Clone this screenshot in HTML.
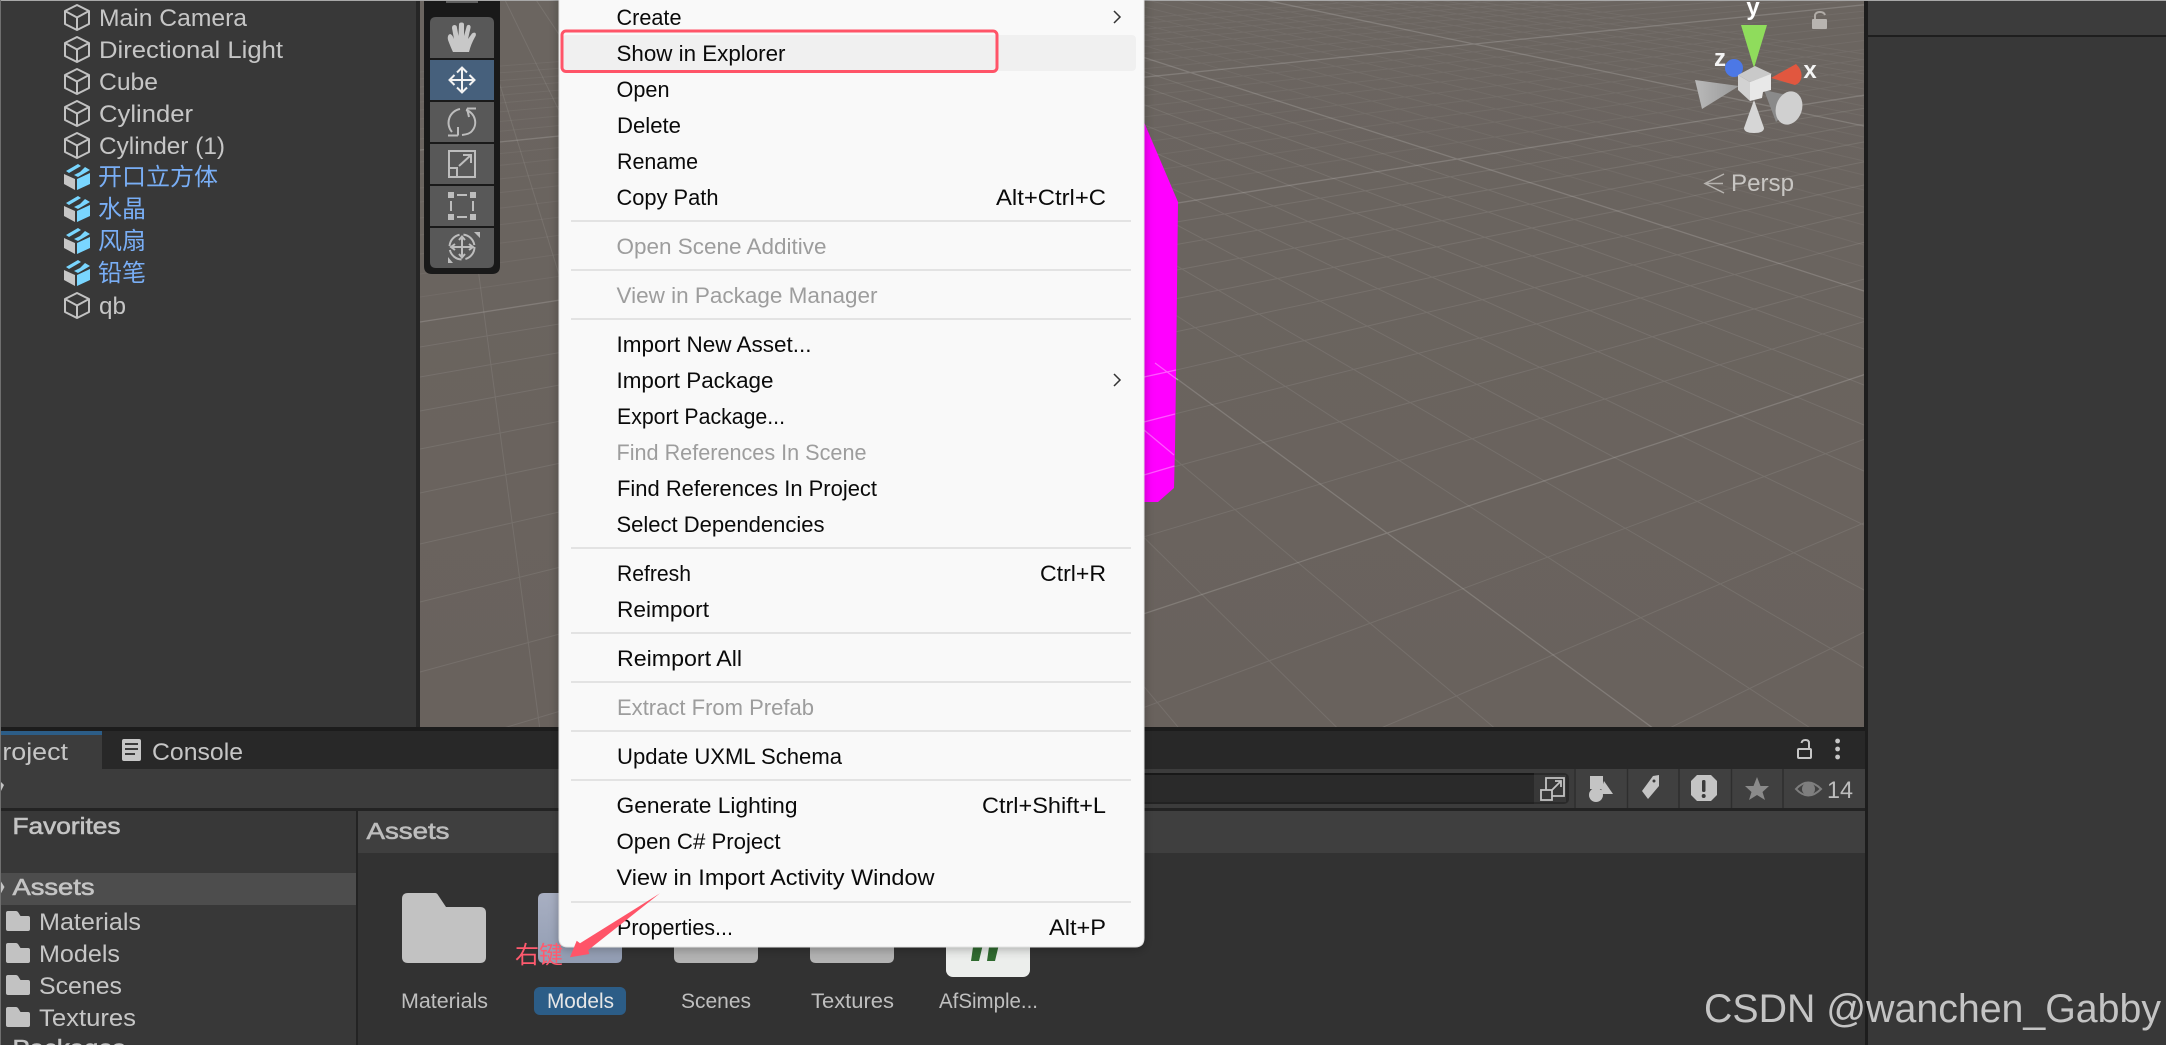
<!DOCTYPE html>
<html><head><meta charset="utf-8"><title>Unity</title>
<style>
html,body{margin:0;padding:0;background:#383838;width:2166px;height:1045px;overflow:hidden}
svg{display:block;position:absolute;left:0;top:0;filter:blur(.35px)}
text{font-family:"Liberation Sans","Noto Sans CJK SC",sans-serif}
.h{font-size:24px;fill:#c6c6c6}
.c{font-size:24px;fill:#79aef5;font-family:"Liberation Sans","Noto Sans CJK SC",sans-serif}
.m{font-size:22px;fill:#0a0a0a}
.d{font-size:22px;fill:#9d9d9d}
.b{font-size:23px;fill:#c4c4c4;stroke:#c4c4c4;stroke-width:.6px}
.l{font-size:21px;fill:#bfbfbf}
</style></head><body>
<svg width="2166" height="1045" viewBox="0 0 2166 1045" xmlns="http://www.w3.org/2000/svg">
<defs>
<clipPath id="sc"><rect x="420" y="0" width="1444" height="727"/></clipPath>
<linearGradient id="bg" x1="0" y1="0" x2="0" y2="1"><stop offset="0" stop-color="#6b6560"/><stop offset="1" stop-color="#69625d"/></linearGradient>
<linearGradient id="mf" x1="0" y1="0" x2="0" y2="1"><stop offset="0" stop-color="#a8afc2"/><stop offset="1" stop-color="#929db3"/></linearGradient>
<linearGradient id="lc" x1="0" y1="0" x2="1" y2="0"><stop offset="0" stop-color="#b9b9b9"/><stop offset="1" stop-color="#999"/></linearGradient>
<filter id="sh" x="-5%" y="-5%" width="110%" height="110%"><feDropShadow dx="0" dy="2" stdDeviation="5" flood-color="#000" flood-opacity=".28"/></filter>
<path id="cube" fill="none" stroke="#c2c2c2" stroke-width="2" stroke-linejoin="round" d="M13 1L25 7V20L13 26L1 20V7ZM1 7L13 13.5L25 7M13 13.5V26"/>
<g id="pf">
<path fill="#c6c6c6" d="M0 11L11 16V27L0 21Z"/>
<path fill="#79d6ff" d="M13 16L26 10V21L13 27Z"/>
<path fill="#79d6ff" d="M2 8L14 1L17 3L5 10ZM16 9L21 4L26 7L14 14L10 12Z"/>
</g>
<path id="fb" d="M6 0H33Q35 0 36 2L44 14H78Q84 14 84 20V64Q84 70 78 70H6Q0 70 0 64V6Q0 0 6 0Z"/>
<path id="fs" fill="#c2c2c2" d="M2 0H10Q11 0 12 1L14.500 5H22Q24 5 24 7V18Q24 20 22 20H2Q0 20 0 18V2Q0 0 2 0Z"/>
</defs>

<!-- base panels -->
<rect width="2166" height="1045" fill="#383838"/>
<rect x="0" y="0" width="416" height="727" fill="#383838"/>
<rect x="416" y="0" width="4" height="735" fill="#262626"/>
<rect x="420" y="0" width="1444" height="727" fill="url(#bg)"/>

<!-- grid -->
<g clip-path="url(#sc)" fill="none">
<path stroke="#fff" stroke-opacity=".085" d="M3463 -156L420 2049M3463 -156L420 1631M3463 -156L420 1344M3463 -156L420 1136M3463 -156L420 977M3463 -156L420 753M3463 -156L420 672M3463 -156L420 602M3463 -156L420 544M3463 -156L420 493M3463 -156L420 449M3463 -156L420 411M3463 -156L420 377M3463 -156L420 347
M418 -178L1864 10582M418 -178L1864 4462M418 -178L1864 2782M418 -178L1864 2001M418 -178L1864 1544M418 -178L1864 1247M418 -178L1864 1039M418 -178L1864 763M418 -178L1864 668M418 -178L1864 590M418 -178L1864 525M418 -178L1864 471M418 -178L1864 425M418 -178L1864 385M418 -178L1864 349M418 -178L1864 319"/>
<path stroke="#fff" stroke-opacity=".05" d="M3463 -156L420 297M3463 -156L420 274M3463 -156L420 254M3463 -156L420 235M3463 -156L420 218M3463 -156L420 202M3463 -156L420 188M3463 -156L420 174M3463 -156L420 162M3463 -156L420 139M3463 -156L420 129M3463 -156L420 119M3463 -156L420 110M3463 -156L420 102M3463 -156L420 94M3463 -156L420 87M3463 -156L420 79M3463 -156L420 72
M418 -178L1864 267M418 -178L1864 245M418 -178L1864 225M418 -178L1864 207M418 -178L1864 190M418 -178L1864 175M418 -178L1864 161M418 -178L1864 149M418 -178L1864 137M418 -178L1864 116M418 -178L1864 106M418 -178L1864 97M418 -178L1864 89M418 -178L1864 81M418 -178L1864 74M418 -178L1864 67M418 -178L1864 60M418 -178L1864 54"/>
<path stroke="#fff" stroke-opacity=".16" stroke-width="1.300" d="M3463 -156L420 854M3463 -156L420 322M3463 -156L420 150M418 -178L1864 883M418 -178L1864 291M418 -178L1864 126"/>
</g>
<!-- magenta -->
<path fill="#ff00ff" d="M1130 92L1144 122L1178 202L1177 288L1176 378L1175 447L1174 488L1158 502H1130Z"/>
<path fill="none" stroke="#fff" stroke-opacity=".35" stroke-width="1.200" d="M1144 475L1174.500 466M1144 422L1175 414M1144 377L1176 370M1155 363L1178 380M1144 430L1174 455"/>

<!-- gizmo -->
<g>
<text x="1753" y="15" text-anchor="middle" style="font-size:24px;fill:#fff;font-weight:bold">y</text>
<text x="1720" y="66" text-anchor="middle" style="font-size:24px;fill:#f4f4f4;font-weight:bold">z</text>
<text x="1810" y="78" text-anchor="middle" style="font-size:24px;fill:#f4f4f4;font-weight:bold">x</text>
<circle cx="1734" cy="68" r="9" fill="#4c78e6"/>
<path fill="#8fdc5c" d="M1741 25H1767L1754 68Z"/>
<path fill="#e1573f" d="M1771 78L1796 64Q1802 70 1801.500 76Q1801 83 1795 85Z"/>
<path fill="url(#lc)" d="M1739 86L1695 80L1702 109Z"/>
<path fill="#d6d6d6" d="M1754 100L1744 128Q1744 133 1754 133Q1764 133 1764 128Z"/>
<path fill="#8a8a8a" d="M1764 90L1776 122L1800 98Z"/>
<ellipse cx="1789" cy="108" rx="13" ry="17" transform="rotate(18 1789 108)" fill="#d0d0d0"/>
<path fill="#c9c9c9" d="M1755 66L1772 74L1750 82L1738 75Z"/>
<path fill="#d2d2d2" d="M1738 75L1750 82V101L1738 90Z"/>
<path fill="#e8e8e8" d="M1750 82L1771 74V90L1763 92L1762 98L1750 101Z"/>
<path fill="none" stroke="#b0aba6" stroke-width="2" d="M1815 19V15Q1816 12 1820 12Q1824 12 1825 15"/>
<rect x="1812" y="19" width="15" height="10" rx="1" fill="#b8b4b0"/>
<path fill="none" stroke="#b5b2ae" stroke-width="1.500" d="M1724 174L1705 183.500L1724 193M1706 183.500H1723"/>
<text class="h" x="1731" y="191" textLength="63" lengthAdjust="spacingAndGlyphs" style="font-size:24px;fill:#c8c6c3">Persp</text>
</g>

<!-- hierarchy -->
<use href="#cube" x="64" y="4"/><text class="h" x="99" y="26" textLength="148" lengthAdjust="spacingAndGlyphs">Main Camera</text>
<use href="#cube" x="64" y="36"/><text class="h" x="99" y="58" textLength="184" lengthAdjust="spacingAndGlyphs">Directional Light</text>
<use href="#cube" x="64" y="68"/><text class="h" x="99" y="90" textLength="59" lengthAdjust="spacingAndGlyphs">Cube</text>
<use href="#cube" x="64" y="100"/><text class="h" x="99" y="122" textLength="94" lengthAdjust="spacingAndGlyphs">Cylinder</text>
<use href="#cube" x="64" y="132"/><text class="h" x="99" y="154" textLength="126" lengthAdjust="spacingAndGlyphs">Cylinder (1)</text>
<use href="#pf" x="64" y="163"/><text class="c" x="98" y="185" textLength="120" lengthAdjust="spacingAndGlyphs">开口立方体</text>
<use href="#pf" x="64" y="195"/><text class="c" x="98" y="217">水晶</text>
<use href="#pf" x="64" y="227"/><text class="c" x="98" y="249">风扇</text>
<use href="#pf" x="64" y="259"/><text class="c" x="98" y="281">铅笔</text>
<use href="#cube" x="64" y="292"/><text class="h" x="99" y="314" textLength="27" lengthAdjust="spacingAndGlyphs">qb</text>

<!-- tool panel -->
<path fill="#191919" d="M424 0H500V266Q500 274 492 274H432Q424 274 424 266Z"/>
<rect x="446" y="0" width="32" height="3" fill="#5f5f5f"/>
<path fill="#585858" d="M436 17H488Q494 17 494 23V58H430V23Q430 17 436 17Z"/>
<rect x="430" y="60" width="64" height="40" fill="#46607c"/>
<rect x="430" y="102" width="64" height="40" fill="#585858"/>
<rect x="430" y="144" width="64" height="40" fill="#585858"/>
<rect x="430" y="186" width="64" height="40" fill="#585858"/>
<path fill="#585858" d="M430 228H494V262Q494 268 488 268H436Q430 268 430 262Z"/>
<!-- hand -->
<path fill="#c8c8c8" d="M453 52Q451 48 448 40Q447 35 450 34Q452 34 454 39L452 28Q452 25 454.500 25Q457 25 457 28L458.500 36L459 24.500Q459 22.500 461.500 22.500Q464 22.500 464 24.500V36L466.500 27Q467 24.500 469.500 25Q471 26 470.500 28L468 39L472 33.500Q474 32 475.500 33Q476.500 35 475 37Q471 44 469 52Z"/>
<!-- move -->
<g fill="none" stroke="#f2f2f2" stroke-width="2">
<path d="M462 68V92M450 80H474M457 72.500L462 67.500L467 72.500M457 87.500L462 92.500L467 87.500M454.500 75L449.500 80L454.500 85M469.500 75L474.500 80L469.500 85"/>
</g>
<!-- rotate -->
<g fill="none" stroke="#bdbdbd" stroke-width="2">
<path d="M460 109A14 14 0 0 0 452 132M466 110A13 13 0 0 1 472 131Q470 134 462 135"/>
<path d="M467 108.500H476M467 108.500L469 117M448 135.500H458M458 127V135.500"/>
</g>
<!-- scale -->
<g fill="none" stroke="#bdbdbd" stroke-width="2">
<path d="M449 151H475V177H449ZM449 168H457V177M459 166L471 155M463 155H471V163"/>
</g>
<!-- rect -->
<g fill="#bdbdbd">
<rect x="448" y="192" width="6" height="6"/><rect x="470" y="192" width="6" height="6"/><rect x="448" y="214" width="6" height="6"/><rect x="470" y="214" width="6" height="6"/>
<rect x="457" y="194" width="10" height="2"/><rect x="457" y="216" width="10" height="2"/><rect x="450" y="201" width="2" height="10"/><rect x="472" y="201" width="2" height="10"/>
</g>
<!-- transform -->
<g fill="none" stroke="#bdbdbd" stroke-width="2">
<circle cx="462" cy="247" r="12.500" stroke-dasharray="16 4"/>
<path d="M462 237V257M452 247H472M459 240L462 236.500L465 240M459 254L462 257.500L465 254M455 244L451 247L455 250M469 244L473 247L469 250"/>
</g>
<path fill="#bdbdbd" d="M474 232H480V238ZM448 263V257L453 263Z"/>

<!-- right panel -->
<rect x="1864" y="0" width="4" height="1045" fill="#1d1d1d"/>
<rect x="1868" y="0" width="298" height="35" fill="#3c3c3c"/>
<rect x="1868" y="35" width="298" height="2" fill="#1e1e1e"/>

<!-- bottom panel -->
<rect x="0" y="727" width="1865" height="4" fill="#1c1c1c"/>
<rect x="0" y="731" width="1865" height="38" fill="#282828"/>
<rect x="0" y="731" width="102" height="38" fill="#3c3c3c"/>
<rect x="0" y="731" width="102" height="4" fill="#2c5d87"/>
<text class="h" x="-15.600" y="760" textLength="83.600" lengthAdjust="spacingAndGlyphs">Project</text>
<rect x="122" y="739" width="19" height="22" rx="2" fill="#c6c6c6"/>
<path stroke="#3a3a3a" stroke-width="2" d="M125 744H138M125 749H138M125 754H135"/>
<text class="h" x="152" y="760" textLength="91" lengthAdjust="spacingAndGlyphs">Console</text>
<rect x="0" y="769" width="1865" height="39" fill="#3c3c3c"/>
<rect x="1576" y="769" width="289" height="39" fill="#404040"/>
<path fill="#c4c4c4" d="M0 781L4 785L0 793Z"/>
<rect x="1100" y="773" width="469" height="31" rx="5" fill="#2a2a2a"/>
<rect x="1100" y="773" width="434" height="2" fill="#181818"/>
<rect x="1100" y="802" width="434" height="2" fill="#222"/>
<rect x="1534" y="775" width="32" height="27" fill="#383838"/>
<g fill="none" stroke="#c2c2c2" stroke-width="1.800">
<path d="M1546 790V778H1564V796H1552"/><rect x="1541" y="790" width="11" height="10"/><path d="M1551 791L1560 782M1555 781H1561V787"/>
</g>
<path stroke="#2e2e2e" stroke-width="1.500" d="M1575 769V808M1627.500 769V808M1679 769V808M1731.500 769V808M1783 769V808"/>
<g fill="#c4c4c4">
<rect x="1590" y="776" width="13" height="13"/><path d="M1604 781L1613 794H1600Z"/><circle cx="1596" cy="795" r="7"/>
<path d="M1659 775V786L1648 799L1642 791L1653 776Z"/>
<path d="M1697 775H1711L1717 781V795L1711 801H1697L1691 795V781Z"/>
</g>
<circle cx="1654" cy="781" r="1.500" fill="#3c3c3c"/>
<rect x="1702" y="780" width="3.500" height="12" rx="1.500" fill="#3a3a3a"/><circle cx="1703.700" cy="796" r="2" fill="#3a3a3a"/>
<path fill="#8a8a8a" d="M1757 777L1760.500 786H1769L1762.500 792L1765 800L1757 795L1749 800L1751.500 792L1745 786H1753.500Z"/>
<g fill="none" stroke="#7e7e7e" stroke-width="2"><path d="M1796 789Q1808 776 1821 789Q1808 802 1796 789Z"/></g><circle cx="1808.500" cy="789" r="6.500" fill="#7e7e7e"/>
<text x="1827" y="798" textLength="26" lengthAdjust="spacingAndGlyphs" style="font-size:24px;fill:#bdbdbd">14</text>
<!-- lock, dots -->
<g fill="none" stroke="#c6c6c6" stroke-width="2"><rect x="1798" y="749" width="13" height="9" rx="1"/><path d="M1809 749V743Q1809 740 1805.500 740Q1802 740 1801.500 743"/></g>
<g fill="#c6c6c6"><circle cx="1837.600" cy="741" r="2.400"/><circle cx="1837.600" cy="749" r="2.400"/><circle cx="1837.600" cy="757" r="2.400"/></g>

<rect x="0" y="808" width="1865" height="3" fill="#232323"/>
<rect x="0" y="811" width="356" height="234" fill="#383838"/>
<rect x="356" y="811" width="2" height="234" fill="#232323"/>
<rect x="358" y="811" width="1507" height="42" fill="#3f3f3f"/>
<rect x="358" y="853" width="1507" height="192" fill="#323232"/>
<rect x="1865" y="727" width="3" height="318" fill="#1d1d1d"/>

<text class="b" x="12.500" y="834" textLength="108" lengthAdjust="spacingAndGlyphs">Favorites</text>
<rect x="0" y="873" width="356" height="32" fill="#4d4d4d"/>
<path fill="#c4c4c4" d="M0 880L4.500 887L0 895Z"/>
<text class="b" x="12.500" y="895" textLength="82" lengthAdjust="spacingAndGlyphs">Assets</text>
<use href="#fs" x="6" y="911"/><text class="h" x="39" y="930" textLength="102" lengthAdjust="spacingAndGlyphs">Materials</text>
<use href="#fs" x="6" y="943"/><text class="h" x="39" y="962" textLength="81" lengthAdjust="spacingAndGlyphs">Models</text>
<use href="#fs" x="6" y="975"/><text class="h" x="39" y="994" textLength="83" lengthAdjust="spacingAndGlyphs">Scenes</text>
<use href="#fs" x="6" y="1007"/><text class="h" x="39" y="1026" textLength="97" lengthAdjust="spacingAndGlyphs">Textures</text>
<text class="b" x="12.500" y="1056" textLength="113" lengthAdjust="spacingAndGlyphs">Packages</text>
<text class="b" x="366.500" y="839" textLength="83" lengthAdjust="spacingAndGlyphs" style="fill:#bdbdbd;stroke:#bdbdbd">Assets</text>

<!-- asset tiles -->
<use href="#fb" x="402" y="893" fill="#c2c2c2"/>
<use href="#fb" x="538" y="893" fill="url(#mf)"/>
<use href="#fb" x="674" y="893" fill="#b3b3b3"/>
<use href="#fb" x="810" y="893" fill="#b3b3b3"/>
<rect x="946" y="900" width="84" height="77" rx="7" fill="#eceeec"/>
<path fill="#2f6b2f" d="M974 940H984L979 961H971ZM990 940H1000L995 961H987Z"/>
<text class="l" x="401" y="1008" textLength="87" lengthAdjust="spacingAndGlyphs">Materials</text>
<rect x="534" y="987" width="92" height="28" rx="6" fill="#2c5d87"/>
<text class="l" x="547" y="1008" textLength="67" lengthAdjust="spacingAndGlyphs" style="fill:#e6e6e6">Models</text>
<text class="l" x="681" y="1008" textLength="70" lengthAdjust="spacingAndGlyphs">Scenes</text>
<text class="l" x="811" y="1008" textLength="83" lengthAdjust="spacingAndGlyphs">Textures</text>
<text class="l" x="939" y="1008" textLength="99" lengthAdjust="spacingAndGlyphs">AfSimple...</text>

<!-- top & left edges -->
<rect x="0" y="0" width="2166" height="1" fill="#a8a8a8"/>
<rect x="0" y="0" width="1" height="1045" fill="#6f6f6f"/>

<!-- menu -->
<path fill="#f9f9f9" stroke="#e2e2e2" filter="url(#sh)" d="M559 -20H1144V938Q1144 947 1135 947H568Q559 947 559 938Z"/>
<rect x="562" y="35" width="574" height="36" rx="4" fill="#f0f0f0"/>
<g fill="#e3e3e3">
<rect x="571" y="220" width="560" height="2"/><rect x="571" y="269" width="560" height="2"/><rect x="571" y="318" width="560" height="2"/>
<rect x="571" y="547" width="560" height="2"/><rect x="571" y="632" width="560" height="2"/><rect x="571" y="681" width="560" height="2"/>
<rect x="571" y="730" width="560" height="2"/><rect x="571" y="779" width="560" height="2"/><rect x="571" y="901" width="560" height="2"/>
</g>
<g>
<text class="m" x="616.500" y="25" textLength="65" lengthAdjust="spacingAndGlyphs">Create</text>
<text class="m" x="616.500" y="61" textLength="169" lengthAdjust="spacingAndGlyphs">Show in Explorer</text>
<text class="m" x="616.500" y="97" textLength="53" lengthAdjust="spacingAndGlyphs">Open</text>
<text class="m" x="617" y="133" textLength="64" lengthAdjust="spacingAndGlyphs">Delete</text>
<text class="m" x="617" y="169" textLength="81" lengthAdjust="spacingAndGlyphs">Rename</text>
<text class="m" x="616.500" y="205" textLength="102" lengthAdjust="spacingAndGlyphs">Copy Path</text>
<text class="m" x="996" y="205" textLength="110" lengthAdjust="spacingAndGlyphs">Alt+Ctrl+C</text>
<text class="d" x="616.500" y="254" textLength="210" lengthAdjust="spacingAndGlyphs">Open Scene Additive</text>
<text class="d" x="616.500" y="303" textLength="261" lengthAdjust="spacingAndGlyphs">View in Package Manager</text>
<text class="m" x="616.500" y="352" textLength="195" lengthAdjust="spacingAndGlyphs">Import New Asset...</text>
<text class="m" x="616.500" y="388" textLength="157" lengthAdjust="spacingAndGlyphs">Import Package</text>
<text class="m" x="617" y="424" textLength="168" lengthAdjust="spacingAndGlyphs">Export Package...</text>
<text class="d" x="616.500" y="460" textLength="250" lengthAdjust="spacingAndGlyphs">Find References In Scene</text>
<text class="m" x="617" y="496" textLength="260" lengthAdjust="spacingAndGlyphs">Find References In Project</text>
<text class="m" x="616.500" y="532" textLength="208" lengthAdjust="spacingAndGlyphs">Select Dependencies</text>
<text class="m" x="617" y="581" textLength="74" lengthAdjust="spacingAndGlyphs">Refresh</text>
<text class="m" x="1040" y="581" textLength="66" lengthAdjust="spacingAndGlyphs">Ctrl+R</text>
<text class="m" x="617" y="617" textLength="92" lengthAdjust="spacingAndGlyphs">Reimport</text>
<text class="m" x="617" y="666" textLength="125" lengthAdjust="spacingAndGlyphs">Reimport All</text>
<text class="d" x="617" y="715" textLength="197" lengthAdjust="spacingAndGlyphs">Extract From Prefab</text>
<text class="m" x="617" y="764" textLength="225" lengthAdjust="spacingAndGlyphs">Update UXML Schema</text>
<text class="m" x="616.500" y="813" textLength="181" lengthAdjust="spacingAndGlyphs">Generate Lighting</text>
<text class="m" x="982" y="813" textLength="124" lengthAdjust="spacingAndGlyphs">Ctrl+Shift+L</text>
<text class="m" x="616.500" y="849" textLength="164" lengthAdjust="spacingAndGlyphs">Open C# Project</text>
<text class="m" x="616.500" y="885" textLength="318" lengthAdjust="spacingAndGlyphs">View in Import Activity Window</text>
<text class="m" x="617" y="935" textLength="116" lengthAdjust="spacingAndGlyphs">Properties...</text>
<text class="m" x="1049" y="935" textLength="57" lengthAdjust="spacingAndGlyphs">Alt+P</text>
</g>
<path fill="none" stroke="#333" stroke-width="1.500" d="M1114 11L1120 17L1114 23M1114 374L1120 380L1114 386"/>

<!-- annotations -->
<rect x="562" y="31" width="435" height="40.500" rx="4" fill="none" stroke="#ff5468" stroke-width="3"/>
<path fill="#ff5468" d="M660 893.300L588.300 950L589.300 954L570 957.300L576.700 940.700L580 943.300Z"/>
<text x="515" y="963" textLength="48" lengthAdjust="spacingAndGlyphs" style="font-size:24px;fill:#ff5a6e;font-family:'Liberation Sans','Noto Sans CJK SC',sans-serif">右键</text>

<!-- watermark -->
<text x="1704" y="1022" textLength="457" lengthAdjust="spacingAndGlyphs" style="font-size:40px;fill:#c4c4c4">CSDN @wanchen_Gabby</text>
</svg>
</body></html>
